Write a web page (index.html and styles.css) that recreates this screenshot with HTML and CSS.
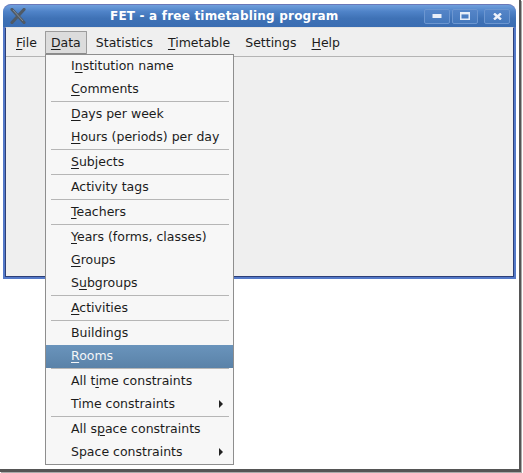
FILE: index.html
```html
<!DOCTYPE html>
<html lang="en">
<head>
<meta charset="utf-8">
<title>FET - a free timetabling program</title>
<link rel="stylesheet" href="styles.css">
</head>
<body>
<div class="screen">
  <div class="window">
    <div class="titlebar">
      <svg class="app-icon" width="16" height="16" viewBox="0 0 16 16"><path d="M2 1.5 L14 14.5 M14 1.5 L2 14.5" stroke="#4f5a66" stroke-width="3.2" stroke-linecap="round" fill="none"/><path d="M3 2 L13 13" stroke="#868d94" stroke-width="1" fill="none"/></svg>
      <div class="title">FET - a free timetabling program</div>
      <div class="win-buttons">
        <div class="win-btn"><svg width="10" height="4" viewBox="0 0 10 4"><rect x="0.5" y="0" width="9" height="4" fill="#e8eef8"/></svg></div>
        <div class="win-btn"><svg width="10" height="8" viewBox="0 0 10 8"><path d="M0.75 0.75 H9.25 V7.25 H0.75 Z" fill="none" stroke="#e8eef8" stroke-width="1.5"/><rect x="0" y="0" width="10" height="2.4" fill="#e8eef8"/></svg></div>
        <div class="win-btn win-close"><svg width="9" height="7" viewBox="0 0 9 7"><path d="M1 0.5 L8 6.5 M8 0.5 L1 6.5" stroke="#eef2fa" stroke-width="2.4" fill="none"/></svg></div>
      </div>
    </div>
    <div class="client">
      <nav class="menubar">
        <span class="menu-title first"><u>F</u>ile</span>
        <span class="menu-title active"><u>D</u>ata</span>
        <span class="menu-title">Statistics</span>
        <span class="menu-title"><u>T</u>imetable</span>
        <span class="menu-title">Settings</span>
        <span class="menu-title"><u>H</u>elp</span>
      </nav>
    </div>
  </div>
  <div class="menu">
    <div class="item">I<u>n</u>stitution name</div>
    <div class="item"><u>C</u>omments</div>
    <div class="sep"></div>
    <div class="item"><u>D</u>ays per week</div>
    <div class="item"><u>H</u>ours (periods) per day</div>
    <div class="sep"></div>
    <div class="item"><u>S</u>ubjects</div>
    <div class="sep"></div>
    <div class="item">Activity tags</div>
    <div class="sep"></div>
    <div class="item"><u>T</u>eachers</div>
    <div class="sep"></div>
    <div class="item"><u>Y</u>ears (forms, classes)</div>
    <div class="item"><u>G</u>roups</div>
    <div class="item">S<u>u</u>bgroups</div>
    <div class="sep"></div>
    <div class="item"><u>A</u>ctivities</div>
    <div class="sep"></div>
    <div class="item">Buildings</div>
    <div class="item selected"><u>R</u>ooms</div>
    <div class="sep"></div>
    <div class="item">All t<u>i</u>me constraints</div>
    <div class="item has-sub">Time constraints<span class="arrow"></span></div>
    <div class="sep"></div>
    <div class="item">All s<u>p</u>ace constraints</div>
    <div class="item has-sub">Space constraints<span class="arrow"></span></div>
  </div>
</div>
</body>
</html>
```
FILE: styles.css
```css
html, body {
  margin: 0;
  padding: 0;
  background: #fff;
}
body {
  width: 523px;
  height: 473px;
  overflow: hidden;
  font-family: "DejaVu Sans", sans-serif;
  font-size: 12.5px;
  color: #1c1c1c;
}
.screen {
  position: relative;
  box-sizing: border-box;
  width: 521px;
  height: 472px;
  padding: 4px 0 0 3px;
  background: #fff;
  border-right: 2px solid #555;
  border-bottom: 3px solid #555;
  box-shadow: 1px 1px 0 #aaa;
}
.window {
  box-sizing: border-box;
  width: 513px;
  height: 275px;
  display: flex;
  flex-direction: column;
  background: #5479c8;
  border-radius: 8px 8px 0 0;
  padding: 0 2px 2px 2px;
  border-top: 1px solid #6a78b8;
}
.titlebar {
  height: 22px;
  margin: 0 -2px;
  padding: 0 6px 0 7px;
  display: flex;
  align-items: center;
  flex: none;
  border-radius: 8px 8px 0 0;
  background: linear-gradient(#6f9fdc 0%, #4f83c8 30%, #3f72b6 60%, #3a6db2 100%);
}
.app-icon {
  flex: none;
}
.title {
  flex: 1;
  padding-left: 84px;
  color: #fff;
  font-weight: 700;
  font-size: 12px;
  letter-spacing: 0.2px;
  white-space: nowrap;
}
.win-buttons {
  display: flex;
  gap: 2px;
  flex: none;
}
.win-btn {
  box-sizing: border-box;
  width: 26px;
  height: 15px;
  display: flex;
  align-items: center;
  justify-content: center;
  background: linear-gradient(#5585c8, #4478bc);
  border: 1px solid #6c96d0;
  border-radius: 2px;
}
.win-close {
  margin-left: 4px;
}
.client {
  flex: 1;
  background: #efefef;
  border: 1px solid #2c3f78;
  border-top: 1px solid #e4e4e4;
}
.menubar {
  height: 28px;
  display: flex;
  align-items: center;
  gap: 3px;
  padding-left: 4px;
  border-bottom: 1px solid #b4b4b4;
}
.menu-title {
  box-sizing: border-box;
  height: 23px;
  line-height: 21px;
  padding: 0 5px;
  border: 1px solid transparent;
}
.menu-title.first {
  padding-right: 4px;
}
.menu-title.active {
  background: #dcdcdc;
  border-color: #9c9c9c;
  border-bottom-color: #8a8a8a;
  border-radius: 1px;
}
u {
  text-decoration-thickness: 1px;
  text-underline-offset: 2px;
}
.menu {
  position: absolute;
  left: 45px;
  top: 54px;
  box-sizing: border-box;
  width: 189px;
  height: 411px;
  background: #f7f7f7;
  border: 1px solid #8e8e8e;
}
.item {
  height: 23px;
  line-height: 21px;
  padding-left: 25px;
  white-space: nowrap;
  position: relative;
}
.selected {
  background: linear-gradient(#6a94bc, #5a82a8);
  color: #f4f6f8;
}
.sep {
  height: 1px;
  margin: 0 4px 1px 5px;
  background: #b6b6b6;
}
.arrow {
  position: absolute;
  right: 10px;
  top: 7px;
  width: 0;
  height: 0;
  border-left: 4px solid #222;
  border-top: 4px solid transparent;
  border-bottom: 4px solid transparent;
}
```
